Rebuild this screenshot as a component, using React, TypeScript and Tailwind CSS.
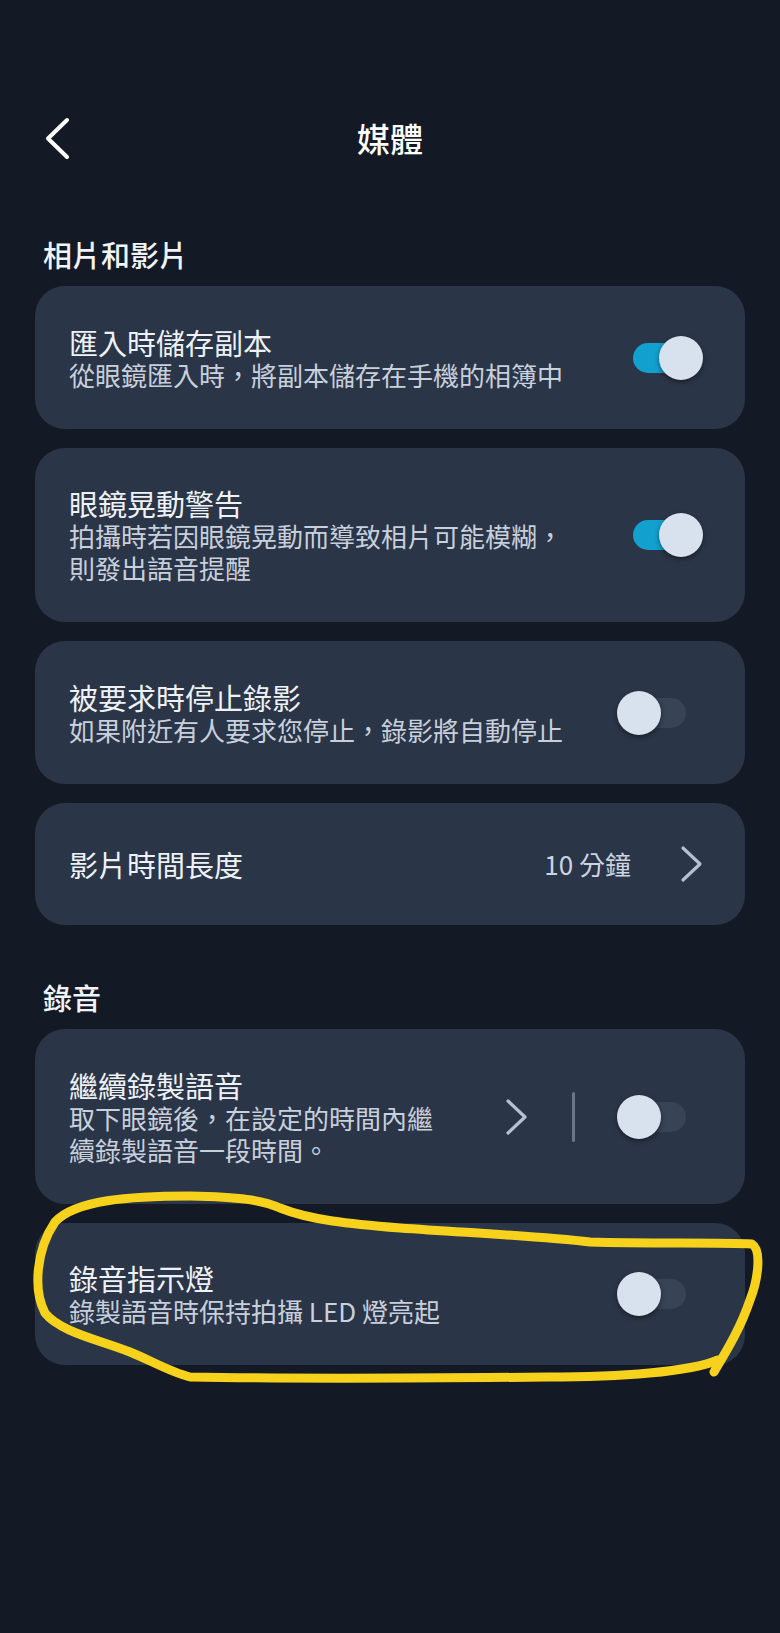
import React from "react";

type SwitchProps = { on?: boolean };

function Switch({ on = false }: SwitchProps) {
  return (
    <div className="relative h-[44px] w-[86px] shrink-0">
      <div
        className={
          on
            ? "absolute left-[16px] top-[7px] h-[30px] w-[53px] rounded-full bg-[#12a0cf]"
            : "absolute left-[16px] top-[7px] h-[30px] w-[53px] rounded-full bg-[#384356]"
        }
      />
      <div
        className={
          on
            ? "absolute left-[42px] top-0 h-[44px] w-[44px] rounded-full bg-[#d8e1ee] shadow-[0_2px_5px_rgba(0,0,0,0.45)]"
            : "absolute left-0 top-0 h-[44px] w-[44px] rounded-full bg-[#d8e1ee] shadow-[0_2px_5px_rgba(0,0,0,0.45)]"
        }
      />
    </div>
  );
}

function Chevron({ className }: { className?: string }) {
  return (
    <svg width="23" height="38" viewBox="0 0 23 38" className={className}>
      <path d="M3 3 L20 19 L3 35" fill="none" stroke="#b6c0d0" strokeWidth="3.2" strokeLinecap="round" strokeLinejoin="round" />
    </svg>
  );
}

function Texts({ title, lines }: { title: string; lines?: string[] }) {
  return (
    <div className="flex min-w-0 flex-1 flex-col">
      <p className="text-[29px] leading-[34px] text-[#eef2f7]">{title}</p>
      {lines?.map((l) => (
        <p key={l} className="text-[26px] leading-[32px] text-[#c8d0dc]">
          {l}
        </p>
      ))}
    </div>
  );
}

export default function App() {
  return (
    <div className="relative min-h-[1633px] w-full overflow-hidden bg-[#131a25] pt-[108px] font-['Noto_Sans_CJK_TC','Noto_Sans',sans-serif]">
      <header className="grid h-[60px] grid-cols-[1fr_auto_1fr] items-center px-[44px]">
        <svg width="27" height="45" viewBox="0 0 27 45">
          <path d="M23 4 L4 22.5 L23 41" fill="none" stroke="#ffffff" strokeWidth="4" strokeLinecap="round" strokeLinejoin="round" />
        </svg>
        <h1 className="text-[33px] font-medium leading-[40px] text-white">媒體</h1>
        <div />
      </header>

      <main className="px-[35px]">
        <h2 className="mt-[68px] pl-[8px] text-[29px] font-medium leading-[36px] text-[#f0f3f7]">相片和影片</h2>
        <div className="mt-[14px] flex flex-col gap-[19px]">
          <div className="flex h-[143px] items-center rounded-[30px] bg-[#2b3548] pl-[34px] pr-[42px]">
            <Texts title="匯入時儲存副本" lines={["從眼鏡匯入時，將副本儲存在手機的相簿中"]} />
            <Switch on />
          </div>
          <div className="flex h-[174px] items-center rounded-[30px] bg-[#2b3548] pl-[34px] pr-[42px]">
            <Texts title="眼鏡晃動警告" lines={["拍攝時若因眼鏡晃動而導致相片可能模糊，", "則發出語音提醒"]} />
            <Switch on />
          </div>
          <div className="flex h-[143px] items-center rounded-[30px] bg-[#2b3548] pl-[34px] pr-[42px]">
            <Texts title="被要求時停止錄影" lines={["如果附近有人要求您停止，錄影將自動停止"]} />
            <Switch />
          </div>
          <div className="flex h-[122px] items-center rounded-[30px] bg-[#2b3548] pl-[34px] pr-[42px]">
            <Texts title="影片時間長度" />
            <span className="text-[26px] leading-[32px] text-[#ccd4e0]">10 分鐘</span>
            <Chevron className="ml-[49px]" />
          </div>
        </div>

        <h2 className="mt-[54px] pl-[8px] text-[29px] font-medium leading-[36px] text-[#f0f3f7]">錄音</h2>
        <div className="mt-[14px] flex flex-col gap-[19px]">
          <div className="flex h-[175px] items-center rounded-[30px] bg-[#2b3548] pl-[34px] pr-[42px]">
            <Texts title="繼續錄製語音" lines={["取下眼鏡後，在設定的時間內繼", "續錄製語音一段時間。"]} />
            <Chevron />
            <div className="ml-[44px] mr-[42px] h-[50px] w-[3px] rounded-full bg-[#6b7588]" />
            <Switch />
          </div>
          <div className="flex h-[142px] items-center rounded-[30px] bg-[#2b3548] pl-[34px] pr-[42px]">
            <Texts title="錄音指示燈" lines={["錄製語音時保持拍攝 LED 燈亮起"]} />
            <Switch />
          </div>
        </div>
      </main>

      {/* hand-drawn highlight */}
      <svg
        className="pointer-events-none absolute left-0 top-0"
        width="780"
        height="1633"
        viewBox="0 0 780 1633"
      >
        <path
          d="M45 1313 C33 1290 36 1250 55 1222 C75 1200 130 1196 190 1196 C240 1197 262 1200 280 1208 C310 1220 350 1224 400 1228 C470 1233 540 1236 590 1242 C650 1244 720 1242 752 1244 C762 1250 758 1280 750 1300 C740 1330 724 1355 714 1372 M718 1360 C690 1372 620 1377 548 1377 C450 1378 300 1379 190 1377 C170 1372 150 1360 130 1352 C100 1340 60 1332 45 1313"
          fill="none"
          stroke="#f7d21c"
          strokeWidth="9"
          strokeLinecap="round"
          strokeLinejoin="round"
        />
      </svg>
    </div>
  );
}
